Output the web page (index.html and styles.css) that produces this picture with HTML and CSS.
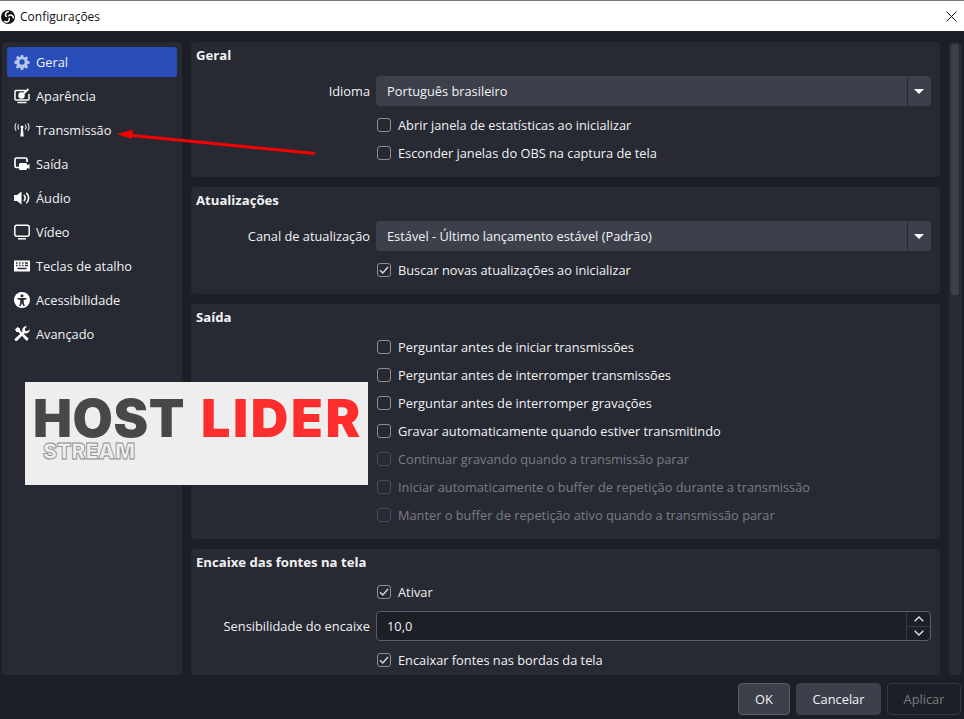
FILE: index.html
```html
<!DOCTYPE html>
<html lang="pt-BR">
<head>
  <meta charset="UTF-8">
  <title>Configurações</title>
  <link rel="stylesheet" href="styles.css">
</head>
<body>
  <div class="window">
    <div class="titlebar">
      <svg class="obs-logo" viewBox="0 0 14 14">
        <circle cx="7" cy="7" r="7" fill="#111"/>
        <path d="M7.800 1.800a2.700 2.700 0 0 0-1.900 5M12.200 8.300a2.700 2.700 0 0 0-4.900-2M3.300 10.800a2.700 2.700 0 0 0 4.600-2.900" fill="none" stroke="#fff" stroke-width="1.500"/>
      </svg>
      <span class="title">Configurações</span>
      <svg class="close" viewBox="0 0 11 11"><path d="M.5.5l10 10M10.500.5l-10 10" stroke="#111" stroke-width="1"/></svg>
    </div>

    <div class="main">
      <div class="sidebar">
        <div class="nav-item active">
          <svg class="nav-icon" viewBox="-1 -1 18 18"><path fill="#b6c3ea" fill-rule="evenodd" d="M6.600 0h2.800l.4 2.200 1.300.6 1.900-1.300 2 2-1.300 1.900.6 1.300 2.200.4v2.800l-2.200.4-.6 1.300 1.300 1.900-2 2-1.900-1.300-1.300.6-.4 2.200H6.600l-.4-2.200-1.300-.6L3 15.500l-2-2 1.300-1.900-.6-1.300-2.200-.4V6.600l2.200-.4.6-1.300L1.300 3l2-2 1.900 1.300 1.300-.6zM8 5a3 3 0 1 0 0 6 3 3 0 0 0 0-6z"/></svg>
          <span>Geral</span>
        </div>
        <div class="nav-item">
          <svg class="nav-icon" viewBox="0 0 16 16"><path fill="none" stroke="#fff" stroke-width="1.500" d="M12 2.500H2a1 1 0 0 0-1 1V11a1 1 0 0 0 1 1h12a1 1 0 0 0 1-1V6"/><circle cx="7.500" cy="7.500" r="3.200" fill="#fff"/><path d="M8 7l6.500-6" stroke="#fff" stroke-width="1.800"/><path d="M3.500 14.500h9" stroke="#fff" stroke-width="1.500"/></svg>
          <span>Aparência</span>
        </div>
        <div class="nav-item">
          <svg class="nav-icon" viewBox="0 0 16 16"><circle cx="8" cy="5" r="1.500" fill="#fff"/><path d="M7.300 5h1.400l1 9.500H6.300z" fill="#fff"/><path d="M5 2.500a3.800 3.800 0 0 0 0 5M11 2.500a3.800 3.800 0 0 1 0 5M2.200 1.200a7 7 0 0 0 0 7.600M13.800 1.200a7 7 0 0 1 0 7.600" fill="none" stroke="#e4e4e4" stroke-width="1.100"/></svg>
          <span>Transmissão</span>
        </div>
        <div class="nav-item">
          <svg class="nav-icon" viewBox="0 0 16 16"><path d="M5 11.500H2.500a1.500 1.500 0 0 1-1.500-1.500V3.500A1.500 1.500 0 0 1 2.500 2h9A1.500 1.500 0 0 1 13 3.500V6" fill="none" stroke="#fff" stroke-width="1.700"/><rect x="5" y="7" width="8" height="7" rx="1.200" fill="#fff"/><path d="M12.500 9.500l3-1.500v5l-3-1.500z" fill="#fff"/></svg>
          <span>Saída</span>
        </div>
        <div class="nav-item">
          <svg class="nav-icon" viewBox="0 0 16 16"><path d="M0 5h3l4.500-3.500v13L3 11H0z" fill="#fff"/><path d="M9.800 5a4 4 0 0 1 0 6M12.300 2.800a7 7 0 0 1 0 10.400" fill="none" stroke="#fff" stroke-width="1.600"/></svg>
          <span>Áudio</span>
        </div>
        <div class="nav-item">
          <svg class="nav-icon" viewBox="0 0 16 16"><rect x=".8" y="1.300" width="14.400" height="10.900" rx="2" fill="none" stroke="#fff" stroke-width="1.500"/><path d="M4 14.800h8" stroke="#fff" stroke-width="1.500"/></svg>
          <span>Vídeo</span>
        </div>
        <div class="nav-item">
          <svg class="nav-icon" viewBox="0 0 16 16"><rect y="2.500" width="16" height="11" rx=".5" fill="#fff"/><path d="M2 5h1.500M5 5h1.500M8 5h1.500M11 5h3M2 7.500h1.500M5 7.500h1.500M8 7.500h1.500M11 7.500h3M3.500 10.500h9" stroke="#272a33" stroke-width="1.300"/></svg>
          <span>Teclas de atalho</span>
        </div>
        <div class="nav-item">
          <svg class="nav-icon" viewBox="0 0 16 16"><circle cx="8" cy="8" r="8" fill="#fff"/><circle cx="8" cy="3.800" r="1.500" fill="#272a33"/><path d="M3.500 6h9v1.200L9.700 8v2.500l1.200 3.500H9.300L8 11l-1.300 3H5.100l1.200-3.500V8l-2.800-.8z" fill="#272a33"/></svg>
          <span>Acessibilidade</span>
        </div>
        <div class="nav-item">
          <svg class="nav-icon" viewBox="0 0 16 16"><path d="M1 3.500L3.500 1 6 2.500v1.800l8.700 8.400-2 2.300L4.400 6H2.500z" fill="#fff"/><path d="M15.800 3.300a4 4 0 0 1-5.400 3.900l-7 7.300a1.500 1.500 0 0 1-2.300-2l7.400-6.700A4 4 0 0 1 13 .4l-2.200 2.300.5 2 2 .5z" fill="#fff"/></svg>
          <span>Avançado</span>
        </div>
      </div>

      <div class="content">
        <div class="scroll-area">
          <div class="panel">
            <div class="panel-title">Geral</div>
            <div class="row combo-row">
              <label class="row-label">Idioma</label>
              <div class="combo">
                <span class="combo-text">Português brasileiro</span>
                <span class="combo-arrow"></span>
              </div>
            </div>
            <div class="check-row"><span class="check"></span>Abrir janela de estatísticas ao inicializar</div>
            <div class="check-row"><span class="check"></span>Esconder janelas do OBS na captura de tela</div>
          </div>

          <div class="panel">
            <div class="panel-title">Atualizações</div>
            <div class="row combo-row">
              <label class="row-label">Canal de atualização</label>
              <div class="combo">
                <span class="combo-text">Estável - Último lançamento estável (Padrão)</span>
                <span class="combo-arrow"></span>
              </div>
            </div>
            <div class="check-row"><span class="check checked"><svg viewBox="0 0 14 14"><path d="M3 7.200l2.800 2.800L11 4" fill="none" stroke="#d4d5d9" stroke-width="1.500"/></svg></span>Buscar novas atualizações ao inicializar</div>
          </div>

          <div class="panel">
            <div class="panel-title">Saída</div>
            <div class="check-row"><span class="check"></span>Perguntar antes de iniciar transmissões</div>
            <div class="check-row"><span class="check"></span>Perguntar antes de interromper transmissões</div>
            <div class="check-row"><span class="check"></span>Perguntar antes de interromper gravações</div>
            <div class="check-row"><span class="check"></span>Gravar automaticamente quando estiver transmitindo</div>
            <div class="check-row disabled"><span class="check"></span>Continuar gravando quando a transmissão parar</div>
            <div class="check-row disabled"><span class="check"></span>Iniciar automaticamente o buffer de repetição durante a transmissão</div>
            <div class="check-row disabled"><span class="check"></span>Manter o buffer de repetição ativo quando a transmissão parar</div>
          </div>

          <div class="panel">
            <div class="panel-title">Encaixe das fontes na tela</div>
            <div class="check-row"><span class="check checked"><svg viewBox="0 0 14 14"><path d="M3 7.200l2.800 2.800L11 4" fill="none" stroke="#d4d5d9" stroke-width="1.500"/></svg></span>Ativar</div>
            <div class="row spin-row">
              <label class="row-label">Sensibilidade do encaixe</label>
              <div class="spin">
                <span class="spin-text">10,0</span>
                <div class="spin-buttons">
                  <span class="spin-btn"><svg viewBox="0 0 10 6"><path d="M.7 5.300L5 1l4.300 4.300" fill="none" stroke="#e6e6e8" stroke-width="1.300"/></svg></span>
                  <span class="spin-btn"><svg viewBox="0 0 10 6"><path d="M.7.700L5 5 9.300.7" fill="none" stroke="#e6e6e8" stroke-width="1.300"/></svg></span>
                </div>
              </div>
            </div>
            <div class="check-row"><span class="check checked"><svg viewBox="0 0 14 14"><path d="M3 7.200l2.800 2.800L11 4" fill="none" stroke="#d4d5d9" stroke-width="1.500"/></svg></span>Encaixar fontes nas bordas da tela</div>
          </div>
        </div>
        <div class="scrollbar"><div class="scroll-thumb"></div></div>
      </div>
    </div>

    <div class="footer">
      <button class="btn btn-default">OK</button>
      <button class="btn btn-cancel">Cancelar</button>
      <button class="btn btn-disabled">Aplicar</button>
    </div>

    <!-- imagem colada por cima da captura -->
    <div class="brand">
      <div class="brand-main"><span class="brand-host">HOST</span><span class="brand-lider">LIDER</span></div>
      <div class="brand-sub">STREAM</div>
    </div>
    <svg class="pointer" width="964" height="719" viewBox="0 0 964 719">
      <path d="M315 153.500L130 135.300" stroke="#f60000" stroke-width="3"/>
      <path d="M117 134l16-4.500-1 9.500z" fill="#f60000"/>
    </svg>
  </div>
</body>
</html>
```

FILE: styles.css
```css
* {
  box-sizing: border-box;
}

html, body {
  margin: 0;
  padding: 0;
  height: 100%;
}

body {
  font-family: "Open Sans", "Noto Sans", sans-serif;
  font-size: 12.8px;
  color: #f2f2f4;
  background-color: #1d1f26;
  overflow: hidden;
}

.window {
  position: relative;
  display: flex;
  flex-direction: column;
  width: 964px;
  height: 719px;
  overflow: hidden;
}

.titlebar {
  display: flex;
  align-items: center;
  flex: none;
  height: 31px;
  padding: 1px 7px 0 1px;
  background-color: #fff;
  border-top: 1px solid #7d7d7d;
  color: #111;
  font-size: 12px;
}

.obs-logo {
  width: 14px;
  height: 14px;
  margin-right: 5px;
}

.title {
  flex: 1;
}

.close {
  width: 11px;
  height: 11px;
}

.main {
  display: flex;
  flex: none;
  height: 644px;
  padding: 11px 0 0 2px;
}

.sidebar {
  flex: none;
  width: 180px;
  height: 633px;
  margin-right: 9px;
  padding: 5px;
  background-color: #272a33;
  border-radius: 4px;
}

.nav-item {
  display: flex;
  align-items: center;
  gap: 6px;
  height: 30px;
  margin-bottom: 4px;
  padding-left: 7px;
  border-radius: 3px;
}

.nav-item.active {
  background-color: #284cb8;
}

.nav-icon {
  flex: none;
  width: 16px;
  height: 16px;
}

.content {
  display: flex;
  flex: 1;
  height: 633px;
}

.scroll-area {
  display: flex;
  flex-direction: column;
  flex: none;
  gap: 10px;
  width: 749px;
  height: 633px;
  overflow: hidden;
}

.panel {
  flex: none;
  padding: 0 9px 10px 5px;
  background-color: #272a33;
  border-radius: 4px;
}

.panel-title {
  height: 29px;
  padding-top: 4px;
  font-size: 13.15px;
  font-weight: 700;
  line-height: 18px;
}

.row {
  display: grid;
  grid-template-columns: 174px 1fr;
  column-gap: 6px;
  align-items: center;
}

.combo-row {
  margin-top: 5px;
  margin-bottom: 5px;
}

.spin-row {
  margin-top: 5px;
  margin-bottom: 5px;
}

.row-label {
  text-align: right;
}

.combo {
  display: flex;
  align-items: center;
  height: 30px;
  background-color: #3c404b;
  border-radius: 4px;
}

.combo-text {
  flex: 1;
  padding-left: 11px;
}

.combo-arrow {
  position: relative;
  flex: none;
  width: 24px;
  height: 100%;
  border-left: 1px solid #272a33;
}

.combo-arrow::after {
  content: "";
  position: absolute;
  top: 13px;
  left: 6px;
  border-left: 5px solid transparent;
  border-right: 5px solid transparent;
  border-top: 5px solid #fff;
}

.check-row {
  display: flex;
  align-items: center;
  gap: 7px;
  height: 28px;
  padding-left: 181px;
}

.check {
  flex: none;
  width: 14px;
  height: 14px;
  border: 1px solid #8c8d95;
  border-radius: 3px;
}

.check svg {
  display: block;
  width: 14px;
  height: 14px;
  margin: -1px;
}

.check-row.disabled {
  color: #7a7c84;
}

.check-row.disabled .check {
  border-color: #484b55;
}

.spin {
  display: flex;
  align-items: center;
  height: 30px;
  background-color: #1d1f26;
  border: 1px solid #5a5d6a;
  border-radius: 4px;
}

.spin-text {
  flex: 1;
  padding-left: 10px;
}

.spin-buttons {
  display: flex;
  flex-direction: column;
  flex: none;
  width: 24px;
  height: 100%;
  border-left: 1px solid #353842;
}

.spin-btn {
  display: flex;
  align-items: center;
  justify-content: center;
  flex: 1;
}

.spin-btn + .spin-btn {
  border-top: 1px solid #353842;
}

.spin-btn svg {
  width: 10px;
  height: 6px;
}

.scrollbar {
  flex: none;
  width: 13px;
  height: 633px;
  margin-left: 9px;
  padding: 2px;
  background-color: #272a33;
  border-radius: 4px;
}

.scroll-thumb {
  width: 8px;
  height: 251px;
  background-color: #3c404b;
  border-radius: 3px;
}

.footer {
  display: flex;
  justify-content: flex-end;
  gap: 6px;
  flex: none;
  height: 44px;
  padding: 8px 3px 0 0;
}

.btn {
  height: 32px;
  font-family: inherit;
  font-size: 12.8px;
  color: #f2f2f4;
  background-color: #3c404b;
  border: 1px solid #3c404b;
  border-radius: 4px;
}

.btn-default {
  width: 52px;
  border-color: #5a5d6a;
}

.btn-cancel {
  width: 85px;
}

.btn-disabled {
  width: 74px;
  color: #7a7c84;
  background-color: #1d1f26;
  border-color: #353842;
}

.brand {
  position: absolute;
  top: 382px;
  left: 25px;
  width: 343px;
  height: 103px;
  padding: 13px 0 0 8px;
  background-color: #eeeeee;
  font-family: Inter, "Liberation Sans", sans-serif;
  font-weight: 900;
}

.brand-main {
  display: flex;
  gap: 16px;
  font-size: 52px;
  line-height: 48px;
}

.brand-host {
  color: #484848;
  letter-spacing: .6px;
}

.brand-lider {
  color: #fe2e2e;
  letter-spacing: 2.600px;
}

.brand-sub {
  margin: 1px 0 0 10px;
  font-size: 21px;
  line-height: 16px;
  color: transparent;
  -webkit-text-stroke: .8px #8a8a8a;
}

.pointer {
  position: absolute;
  top: 0;
  left: 0;
  pointer-events: none;
}
```
